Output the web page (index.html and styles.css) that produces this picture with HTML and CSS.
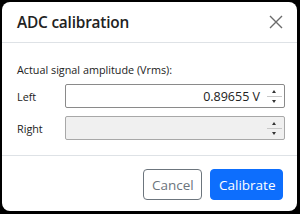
FILE: index.html
```html
<!DOCTYPE html>
<html>
<head>
<meta charset="utf-8">
<link rel="stylesheet" href="styles.css">
</head>
<body>
<div class="modal">
  <div class="header">
    <div class="title">ADC calibration</div>
    <svg class="close" width="14" height="14" viewBox="0 0 14 14"><path d="M1 1L13 13M13 1L1 13" stroke="#6b6b6b" stroke-width="1.4" fill="none"/></svg>
  </div>
  <div class="body">
    <div class="caption">Actual signal amplitude (Vrms):</div>
    <div class="row">
      <div class="label">Left</div>
      <div class="input">
        <div class="value">0.89655 V</div>
        <div class="spin"><div class="up"></div><div class="down"></div></div>
      </div>
    </div>
    <div class="row">
      <div class="label">Right</div>
      <div class="input disabled">
        <div class="value"></div>
        <div class="spin"><div class="up"></div><div class="down"></div></div>
      </div>
    </div>
  </div>
  <div class="footer">
    <button class="btn cancel">Cancel</button>
    <button class="btn primary">Calibrate</button>
  </div>
</div>
</body>
</html>
```
FILE: styles.css
```css
html, body { margin: 0; padding: 0; background: #000; }
body { width: 300px; height: 214px; font-family: "Open Sans", "Noto Sans", sans-serif; color: #222; }
.modal {
  margin: 2px 0 0 2px;
  width: 295px;
  height: 209px;
  background: #fff;
  border-radius: 8px;
  display: flex;
  flex-direction: column;
}
.header {
  height: 40px;
  border-bottom: 1px solid #dee2e6;
  display: flex;
  align-items: center;
  justify-content: space-between;
  padding: 0 14px 0 15px;
}
.title { font-size: 15.4px; font-weight: 600; color: #222; letter-spacing: -0.2px; }
.close { display: block; }
.body {
  height: 112px;
  padding: 0 12px 0 15px;
  border-bottom: 1px solid #dee2e6;
}
.caption { font-size: 10.8px; margin-top: 19px; height: 15px; line-height: 15px; color: #222; }
.row { display: flex; align-items: center; margin-top: 8px; }
.caption + .row { margin-top: 7px; }
.label { width: 48px; font-size: 10.8px; color: #222; }
.input {
  flex: 1;
  height: 22px;
  border: 1px solid #8a8a8a;
  border-radius: 2px;
  display: flex;
  align-items: center;
}
.input.disabled { background: #f0f0f0; border-color: #a8a8a8; }
.value { flex: 1; text-align: right; font-size: 12.5px; padding-right: 7px; color: #222; }
.spin {
  width: 15px;
  height: 20px;
  display: flex;
  flex-direction: column;
  margin-right: 2px;
}
.up, .down { flex: 1; position: relative; }
.up { border-bottom: 1px solid #c8c8c8; }
.up::after, .down::after {
  content: "";
  position: absolute;
  left: 5px;
  top: 4px;
  border-left: 2.5px solid transparent;
  border-right: 2.5px solid transparent;
}
.up::after { border-bottom: 3px solid #333; }
.down::after { border-top: 3px solid #333; top: 3px; }
.footer {
  flex: 1;
  display: flex;
  justify-content: flex-end;
  align-items: center;
  gap: 8px;
  padding: 0 14px 0 0;
}
.btn {
  font-family: "Open Sans", "Noto Sans", sans-serif;
  font-size: 13.5px;
  height: 31px;
  border-radius: 4px;
  padding: 0 8px;
  margin-top: 2px;
}
.cancel { background: #fff; border: 1px solid #6c757d; color: #6c757d; width: 59px; }
.primary { background: #0d6efd; border: 1px solid #0d6efd; color: #fff; width: 73px; }
```
